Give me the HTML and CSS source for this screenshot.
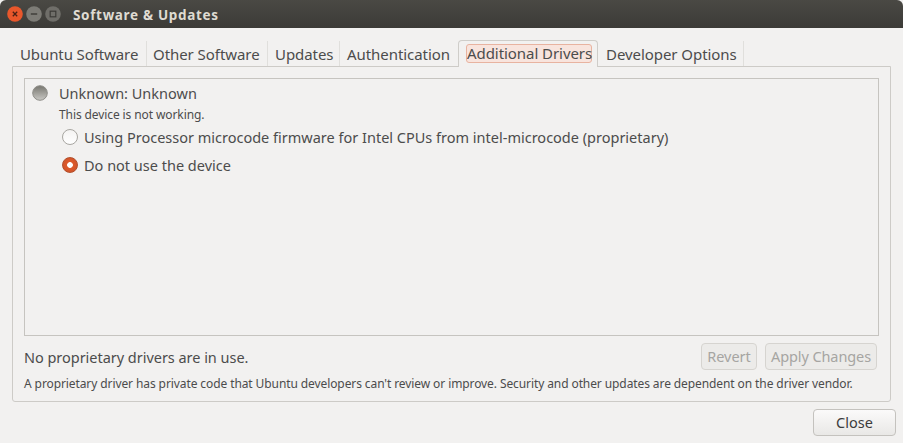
FILE: index.html
```html
<!DOCTYPE html>
<html lang="en">
<head>
<meta charset="utf-8">
<title>Software &amp; Updates</title>
<link rel="stylesheet" href="styles.css">
</head>
<body>
<div class="titlebar">
  <div class="wm">
    <svg class="wm-btn" viewBox="0 0 16 16"><circle cx="8" cy="8" r="7.8" fill="#e9572b"/><path d="M5.8 5.8l4.4 4.4M10.2 5.8l-4.4 4.4" stroke="#4a2115" stroke-width="1.3"/></svg>
    <svg class="wm-btn" viewBox="0 0 16 16"><circle cx="8" cy="8" r="7.8" fill="#7d7c76"/><path d="M4.8 8h6.4" stroke="#3c3b37" stroke-width="1.4"/></svg>
    <svg class="wm-btn" viewBox="0 0 16 16"><circle cx="8" cy="8" r="7.8" fill="#6f6e69"/><rect x="5.2" y="5.2" width="5.6" height="5.6" fill="none" stroke="#3c3b37" stroke-width="1.2"/></svg>
  </div>
  <div class="title">Software &amp; Updates</div>
</div>
<div class="content">
  <div class="tabs">
    <div class="tab t1">Ubuntu Software</div>
    <div class="tab t2">Other Software</div>
    <div class="tab t3">Updates</div>
    <div class="tab t4">Authentication</div>
    <div class="tab-active"><span class="focus">Additional Drivers</span></div>
    <div class="tab t6">Developer Options</div>
  </div>
  <div class="notebook">
    <div class="frame">
      <div class="device">
        <svg class="led" viewBox="0 0 16 16"><defs><linearGradient id="g" x1="0" y1="0" x2="0" y2="1"><stop offset="0" stop-color="#77766f"/><stop offset="1" stop-color="#c9c8c4"/></linearGradient></defs><circle cx="8" cy="8" r="7.3" fill="url(#g)" stroke="#8f8e89"/></svg>
        <span class="device-name">Unknown: Unknown</span>
      </div>
      <div class="status">This device is not working.</div>
      <label class="radio r1"><span class="dot"></span><span>Using Processor microcode firmware for Intel CPUs from intel-microcode (proprietary)</span></label>
      <label class="radio r2"><span class="dot on"></span><span>Do not use the device</span></label>
    </div>
    <div class="actions">
      <span class="state">No proprietary drivers are in use.</span>
      <span class="btns">
        <span class="btn off revert">Revert</span>
        <span class="btn off apply">Apply Changes</span>
      </span>
    </div>
    <div class="note">A proprietary driver has private code that Ubuntu developers can't review or improve. Security and other updates are dependent on the driver vendor.</div>
  </div>
  <div class="footer"><span class="btn close">Close</span></div>
</div>
</body>
</html>
```
FILE: styles.css
```css
html, body { margin: 0; padding: 0; }
body {
  width: 903px; height: 443px; overflow: hidden;
  background: #f2f1f0; color: #4c4c4c;
  font-family: "Noto Sans", "Open Sans", sans-serif;
  font-size: 14.5px;
}
.titlebar {
  height: 28px; display: flex; align-items: center;
  background: linear-gradient(#4a4944, #3c3b37);
  border-radius: 6px 6px 0 0;
}
.wm { display: flex; gap: 3px; margin-left: 7px; }
.wm-btn { width: 16px; height: 16px; display: block; }
.title { margin-left: 12px; padding-top: 2px; color: #dfdbd2; font-weight: 700; font-size: 13.5px; letter-spacing: .67px; }
.content { padding: 0 7px 0 12px; }
.tabs { display: flex; height: 38px; align-items: flex-end; position: relative; z-index: 1; }
.tab {
  box-sizing: border-box; flex: none;
  height: 25px; line-height: 27px; padding-left: 7px;
  border-right: 1px solid #e0dfdc;
  white-space: nowrap; letter-spacing: -.06px;
  font-size: 15px;
}
.t1 { width: 135px; padding-left: 8px; letter-spacing: -.1px; }
.t2 { width: 121px; padding-left: 6px; }
.t3 { width: 72px; }
.t4 { width: 118px; border-right: 0; }
.t6 { width: 146px; padding-left: 8px; }
.tab-active {
  height: 27px; width: 140px; box-sizing: border-box; flex: none;
  margin-bottom: -1px;
  border: 1px solid #cfcdc9; border-bottom: 0; border-radius: 4px 4px 0 0;
  background: #f2f1f0; padding: 3px 5px 0 7px;
}
.focus {
  display: block; height: 19px; line-height: 17px; box-sizing: border-box;
  background: #f8e4dd; border: 1px solid #e8b3a0; border-radius: 3px;
  white-space: nowrap; text-align: center; font-size: 15px; letter-spacing: -.06px;
}
.notebook {
  box-sizing: border-box; width: 879px; height: 336px;
  border: 1px solid #cdcbc7; border-radius: 0 0 3px 3px;
  padding: 11px 11px 0;
}
.frame {
  box-sizing: border-box; height: 258px; width: 855px;
  border: 1px solid #c6c4c0; padding: 5px 7px;
}
.device { display: flex; align-items: center; height: 18px; }
.led { width: 16px; height: 16px; margin-right: 11px; }
.device-name { font-size: 14.5px; }
.status { font-size: 12px; margin: 4px 0 0 27px; line-height: 18px; letter-spacing: -.1px; }
.radio { display: flex; align-items: center; height: 18px; margin-left: 30px; white-space: nowrap; }
.r1 { margin-top: 4px; }
.r2 { margin-top: 10px; }
.dot {
  width: 14px; height: 14px; border-radius: 50%; margin-right: 6px; flex: none;
  border: 1px solid #a8a6a1; background: linear-gradient(#f4f3f2, #ffffff);
}
.dot.on {
  background: radial-gradient(circle, #fff 0 2.5px, #dd5a2b 3.2px, #c9512a 100%);
  border-color: #b3502c;
}
.actions { display: flex; justify-content: space-between; align-items: center; margin-top: 7px; height: 27px; padding-right: 2px; }
.state { letter-spacing: -.03px; }
.btns { display: flex; gap: 8px; }
.btn {
  display: block; box-sizing: border-box; height: 27px; line-height: 25px; text-align: center;
  border: 1px solid #c4c2be; border-radius: 4px;
  background: linear-gradient(#fbfafa, #e9e8e6);
}
.btn.off { color: #a6a5a2; background: #ecebe9; border-color: #d6d4d0; }
.revert { width: 56px; }
.apply { width: 112px; letter-spacing: -.1px; }
.note { font-size: 12px; margin-top: 5px; line-height: 18px; white-space: nowrap; letter-spacing: -.095px; }
.footer { display: flex; justify-content: flex-end; margin-top: 7px; }
.close { width: 83px; color: #3c3c3c; }
```
